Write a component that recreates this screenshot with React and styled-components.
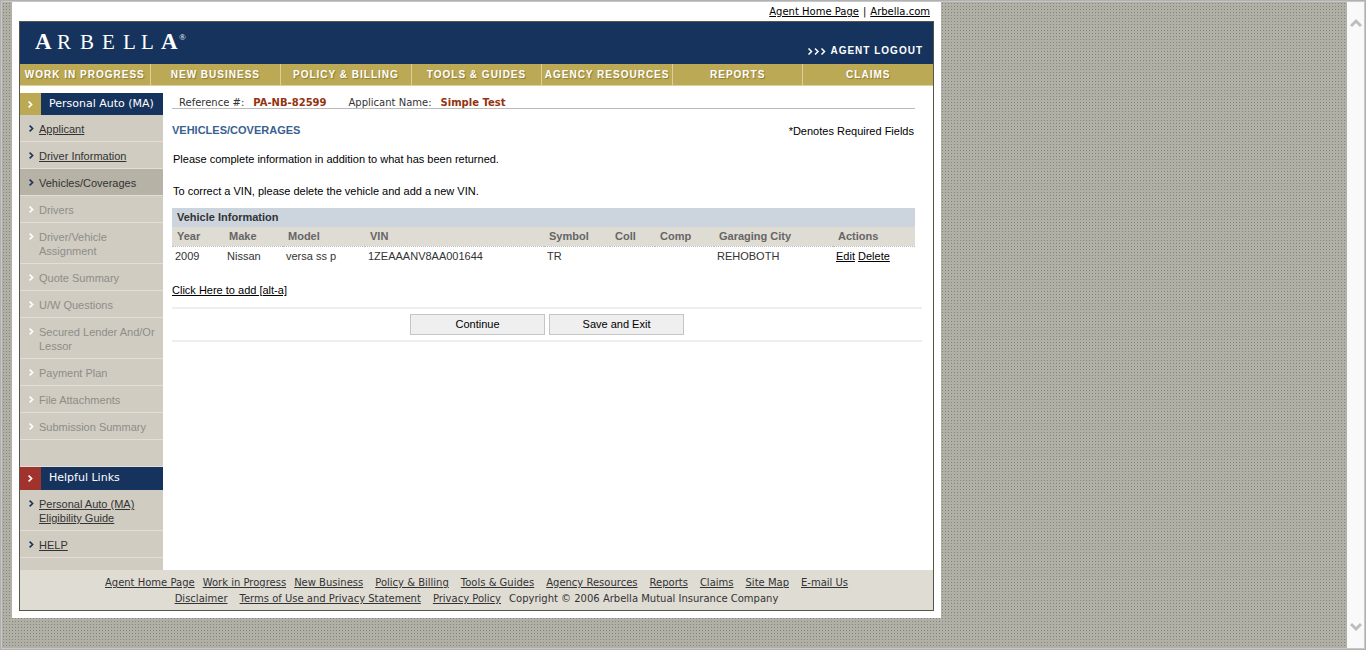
import React from "react";
import styled, { createGlobalStyle } from "styled-components";

const sans = '"Liberation Sans", Arial, sans-serif';
const wide = '"DejaVu Sans", Verdana, sans-serif';

const GlobalStyle = createGlobalStyle`
  * { box-sizing: border-box; }
  body {
    margin: 0;
    font: 11px/14px ${sans};
    color: #000;
  }
  a { color: inherit; }
  ul { list-style: none; margin: 0; padding: 0; }
`;

const Viewport = styled.div`
  display: flex;
  justify-content: space-between;
  min-height: 100vh;
  border: 1px solid #b0b0b0;
  box-shadow: inset 0 0 0 1px #c8c8c8;
  padding: 1px;
  background-color: #b0b0a6;
  background-image: conic-gradient(from 0deg at 1px 1px, transparent 270deg, #85857b 0);
  background-size: 3px 3px;
  background-origin: border-box;
`;

const ScrollTrack = styled.div`
  display: flex;
  flex-direction: column;
  justify-content: space-between;
  align-items: center;
  flex: none;
  width: 17px;
  padding: 16px 0;
  background: #f9f9f9;
`;

const Page = styled.div`
  align-self: flex-start;
  flex: 0 1 929px;
  margin: 0 10px;
  padding: 0 7px 7px;
  background: #fff;
`;

const TopLinks = styled.div`
  display: flex;
  justify-content: flex-end;
  gap: 4px;
  height: 19px;
  padding: 3px 4px 0 0;
  font: 10px/14px ${wide};
`;

const Box = styled.div`
  border: 1px solid #555549;
`;

const Header = styled.header`
  display: flex;
  justify-content: space-between;
  height: 42px;
  padding: 0 10px 0 14px;
  background: #16335d;
  color: #fff;
`;

const Logout = styled.a`
  display: flex;
  align-items: center;
  align-self: flex-end;
  gap: 4px;
  margin-bottom: 6px;
  font-size: 10px;
  font-weight: bold;
  letter-spacing: 1px;
  text-decoration: none;
`;

const Nav = styled.nav`
  display: flex;
  border-bottom: 1px solid #e0cf9c;
  background: #bba955;
`;

const NavLink = styled.a`
  flex: 1;
  height: 21px;
  border-right: 1px solid #e0cf9c;
  font-size: 10px;
  font-weight: bold;
  line-height: 21px;
  letter-spacing: 1px;
  text-align: center;
  text-decoration: none;
  white-space: nowrap;
  color: #fff;
  text-shadow: 1px 1px 1px #8b7c37;
  &:last-child { border-right: 0; }
`;

const Columns = styled.div`
  display: flex;
  padding-top: 7px;
`;

const Sidebar = styled.aside`
  flex: none;
  width: 143px;
  padding-bottom: 12px;
  background: #d0ccc1;
`;

const SideHead = styled.h2`
  display: flex;
  margin: 0;
  background: #16335d;
  color: #fff;
  font: 11px/22px ${wide};
  gap: 8px;
  white-space: nowrap;
`;

const SideMark = styled.span`
  display: flex;
  align-items: center;
  justify-content: center;
  width: 21px;
  height: ${(p) => p.$height}px;
  background: ${(p) => p.$color};
`;

const SideItem = styled.li`
  display: flex;
  gap: 5px;
  min-height: 27px;
  padding: 7px 4px 5px 9px;
  border-bottom: 1px solid #e2dfd7;
  background: ${(p) => (p.$active ? "#b6b2a6" : "transparent")};
  color: ${(p) => (p.$muted ? "#8e8d89" : "#333")};
  svg { flex: none; margin-top: 3px; }
`;

const Main = styled.main`
  flex: 1;
  min-width: 0;
  padding: 3px 11px 0 9px;
`;

const Content = styled.div`
  margin-right: 7px;
`;

const Reference = styled.dl`
  display: flex;
  height: 13px;
  margin: 0;
  padding-left: 7px;
  border-bottom: 1px solid #bbb;
  font: 10px/13px ${wide};
  color: #333;
  dt { margin-right: 9px; }
  dd { margin: 0 22px 0 0; font-weight: bold; color: #933310; }
`;

const TitleRow = styled.div`
  display: flex;
  justify-content: space-between;
  margin: 14px 0 13px;
  padding-right: 1px;
  line-height: 16px;
`;

const Title = styled.h1`
  margin: 0;
  font-size: 11px;
  line-height: 14px;
  color: #3a5f92;
`;

const Note = styled.p`
  margin: 0 0 18px;
  padding-left: 1px;
`;

const Table = styled.table`
  width: 100%;
  margin-top: -8px;
  border-collapse: collapse;
  table-layout: fixed;
  color: #333;
  caption {
    height: 19px;
    padding-left: 5px;
    background: #ccd4de;
    font-weight: bold;
    line-height: 19px;
    text-align: left;
  }
  th {
    height: 19px;
    padding: 0 0 0 5px;
    border-bottom: 1px dotted #bbb;
    background: #dfdcd3;
    color: #666;
    text-align: left;
  }
  td { height: 19px; padding: 0 0 0 3px; }
  td a { color: #000; }
`;

const AddRow = styled.p`
  margin: 18px 0 10px;
`;

const Actions = styled.div`
  display: flex;
  justify-content: center;
  gap: 4px;
  padding: 5px 0;
  border: solid #eee;
  border-width: 2px 0;
`;

const Button = styled.button`
  width: 135px;
  height: 21px;
  padding: 0 0 2px;
  border: 1px solid #c5c5c5;
  background: #efefef;
  color: #000;
  font: 11px/14px ${sans};
`;

const Footer = styled.footer`
  padding: 5px 0 3px;
  background: #dfdcd3;
  color: #333;
  font: 10px/16px ${wide};
`;

const FooterRow = styled.div`
  display: flex;
  justify-content: center;
  gap: 12px;
`;

const FooterGroup = styled.div`
  display: flex;
  gap: 8px;
`;

function Chevron({ color }) {
  return (
    <svg width="5" height="7" viewBox="0 0 5 7" aria-hidden="true">
      <path d="M.6.6l3 2.900-3 2.900" fill="none" stroke={color} strokeWidth="1.6" />
    </svg>
  );
}

function ScrollArrow({ down }) {
  return (
    <svg width="12" height="10" viewBox="0 0 12 10" aria-hidden="true">
      <path
        d={down ? "M1 2l5 5 5-5" : "M1 8l5-5 5 5"}
        fill="none"
        stroke="#bdbdbd"
        strokeWidth="3"
      />
    </svg>
  );
}

function Logo() {
  return (
    <svg width="156" height="42" role="img" aria-label="Arbella" fill="#fff"
      fontFamily='"Liberation Serif", "Times New Roman", serif' fontSize="21">
      <text y="27" x="1 23 46 68 89 107 127">
        <tspan fontSize="23" fontWeight="bold">A</tspan>RBELL<tspan fontSize="23" fontWeight="bold">A</tspan>
      </text>
      <text x="145" y="18" fontSize="9">®</text>
    </svg>
  );
}

const navItems = ["WORK IN PROGRESS", "NEW BUSINESS", "POLICY & BILLING", "TOOLS & GUIDES", "AGENCY RESOURCES", "REPORTS", "CLAIMS"];

const steps = [
  { label: "Applicant", link: true },
  { label: "Driver Information", link: true },
  { label: "Vehicles/Coverages", active: true },
  { label: "Drivers" },
  { label: "Driver/Vehicle Assignment" },
  { label: "Quote Summary" },
  { label: "U/W Questions" },
  { label: "Secured Lender And/Or Lessor" },
  { label: "Payment Plan" },
  { label: "File Attachments" },
  { label: "Submission Summary" },
];

const helpful = ["Personal Auto (MA) Eligibility Guide", "HELP"];

const columns = [
  ["Year", 52], ["Make", 59], ["Model", 82], ["VIN", 179], ["Symbol", 66],
  ["Coll", 45], ["Comp", 59], ["Garaging City", 119], ["Actions", 82],
];

const vehicle = ["2009", "Nissan", "versa ss p", "1ZEAAANV8AA001644", "TR", "", "", "REHOBOTH"];

const firstLinks = ["Agent Home Page", "Work in Progress", "New Business"];
const footerLinks = ["Policy & Billing", "Tools & Guides", "Agency Resources", "Reports", "Claims", "Site Map", "E-mail Us"];

export default function App() {
  return (
    <Viewport>
      <GlobalStyle />
      <Page>
        <TopLinks>
          <a href="#home">Agent Home Page</a>
          <span>|</span>
          <a href="#arbella">Arbella.com</a>
        </TopLinks>
        <Box>
          <Header>
            <Logo />
            <Logout href="#logout">
              <svg width="18" height="7" viewBox="0 0 18 7" fill="none" stroke="#fff" strokeWidth="1.5" aria-hidden="true">
                <path d="M.5.5l3 3-3 3M7 .5l3 3-3 3M13.500.5l3 3-3 3" />
              </svg>
              AGENT LOGOUT
            </Logout>
          </Header>
          <Nav>
            {navItems.map((n) => <NavLink key={n} href="#nav">{n}</NavLink>)}
          </Nav>
          <Columns>
            <Sidebar>
              <SideHead>
                <SideMark $color="#bba955" $height={22}><Chevron color="#fff" /></SideMark>
                Personal Auto (MA)
              </SideHead>
              <ul>
                {steps.map((s) => (
                  <SideItem key={s.label} $active={s.active} $muted={!s.link && !s.active}>
                    <Chevron color={s.link || s.active ? "#16335d" : "#fff"} />
                    {s.link ? <a href="#step">{s.label}</a> : <span>{s.label}</span>}
                  </SideItem>
                ))}
                <SideItem aria-hidden="true" />
              </ul>
              <SideHead>
                <SideMark $color="#a0342c" $height={23}><Chevron color="#fff" /></SideMark>
                Helpful Links
              </SideHead>
              <ul>
                {helpful.map((h) => (
                  <SideItem key={h}>
                    <Chevron color="#16335d" />
                    <a href="#help">{h}</a>
                  </SideItem>
                ))}
              </ul>
            </Sidebar>
            <Main>
              <Content>
                <Reference>
                  <dt>Reference #:</dt>
                  <dd>PA-NB-82599</dd>
                  <dt>Applicant Name:</dt>
                  <dd>Simple Test</dd>
                </Reference>
                <TitleRow>
                  <Title>VEHICLES/COVERAGES</Title>
                  <span>*Denotes Required Fields</span>
                </TitleRow>
                <Note>Please complete information in addition to what has been returned.</Note>
                <Note>To correct a VIN, please delete the vehicle and add a new VIN.</Note>
                <Table>
                  <caption>Vehicle Information</caption>
                  <colgroup>
                    {columns.map(([name, width]) => <col key={name} width={width} />)}
                  </colgroup>
                  <thead>
                    <tr>{columns.map(([name]) => <th key={name} scope="col">{name}</th>)}</tr>
                  </thead>
                  <tbody>
                    <tr>
                      {vehicle.map((v, i) => <td key={i}>{v}</td>)}
                      <td><a href="#edit">Edit</a> <a href="#delete">Delete</a></td>
                    </tr>
                  </tbody>
                </Table>
                <AddRow><a href="#add">Click Here to add [alt-a]</a></AddRow>
              </Content>
              <Actions>
                <Button type="button">Continue</Button>
                <Button type="button">Save and Exit</Button>
              </Actions>
            </Main>
          </Columns>
          <Footer>
            <FooterRow>
              <FooterGroup>
                {firstLinks.map((l) => <a key={l} href="#footer">{l}</a>)}
              </FooterGroup>
              {footerLinks.map((l) => <a key={l} href="#footer">{l}</a>)}
            </FooterRow>
            <FooterRow>
              <a href="#disclaimer">Disclaimer</a>
              <a href="#terms">Terms of Use and Privacy Statement</a>
              <FooterGroup>
                <a href="#privacy">Privacy Policy</a>
                <span>Copyright © 2006 Arbella Mutual Insurance Company</span>
              </FooterGroup>
            </FooterRow>
          </Footer>
        </Box>
      </Page>
      <ScrollTrack>
        <ScrollArrow />
        <ScrollArrow down />
      </ScrollTrack>
    </Viewport>
  );
}
